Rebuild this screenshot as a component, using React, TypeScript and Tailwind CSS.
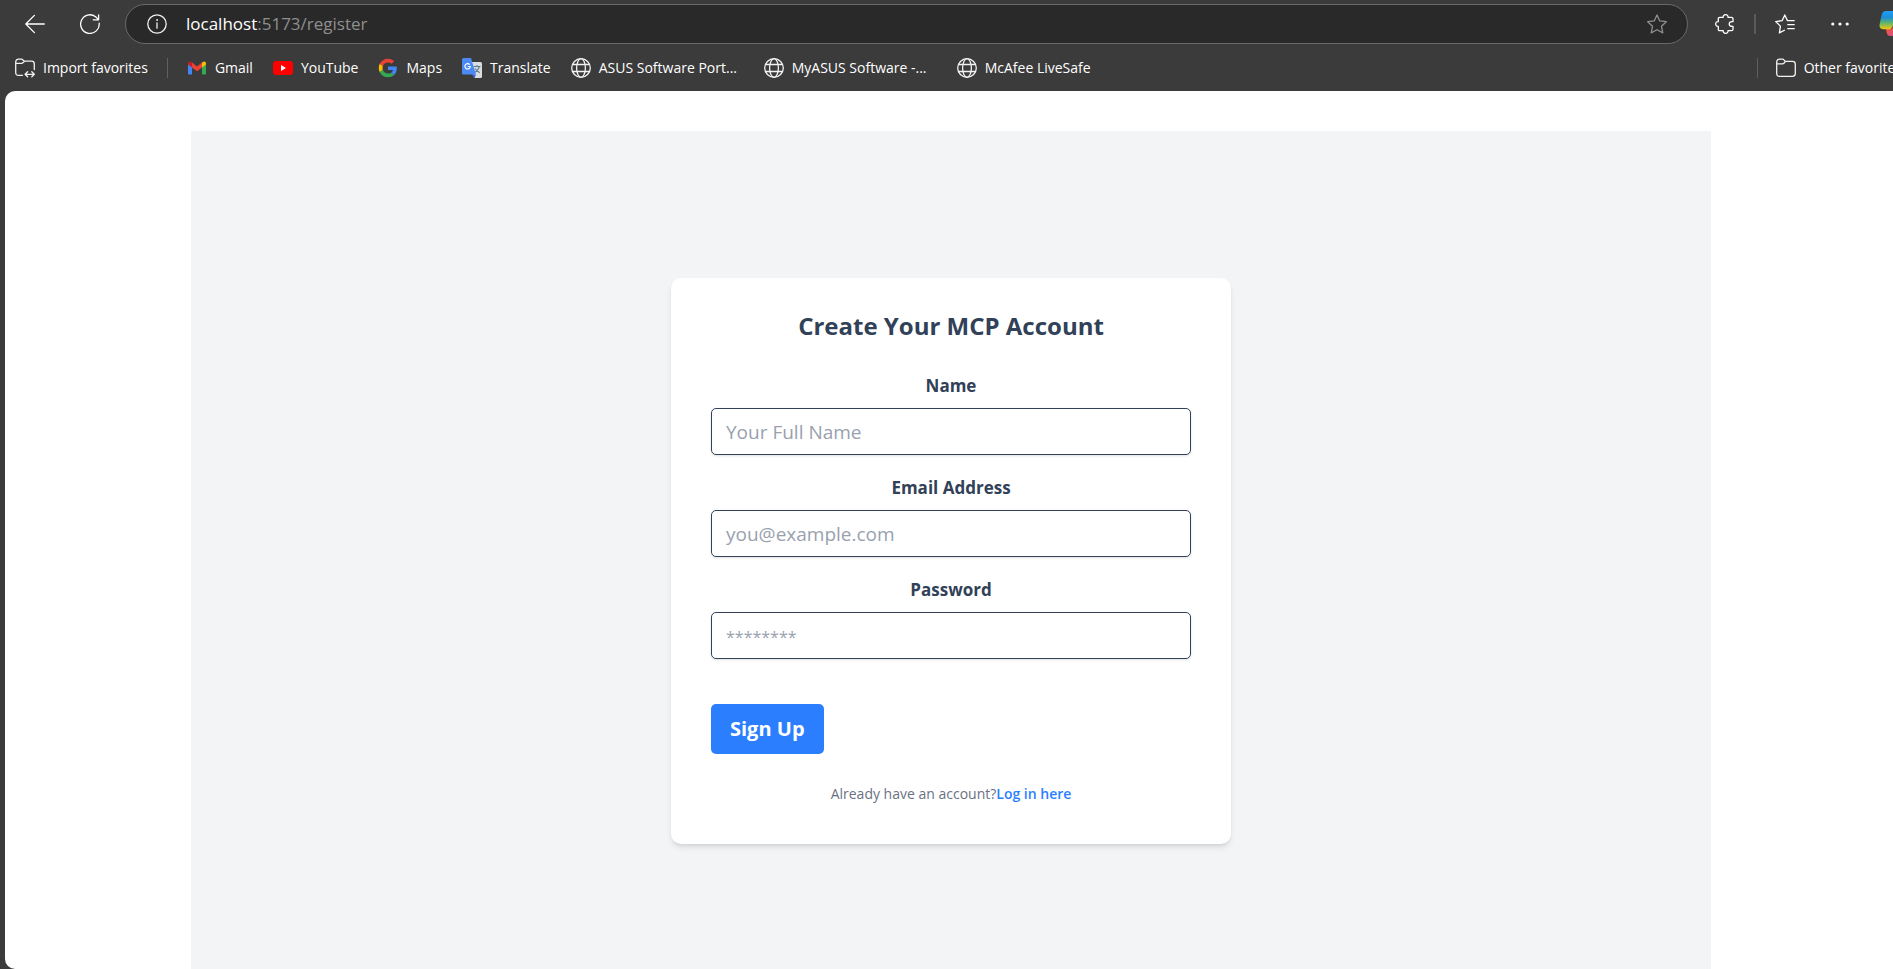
import type { ReactNode } from 'react';

function ArrowLeftIcon() {
  return (
    <svg width="20" height="20" viewBox="0 0 20 20" fill="none" stroke="#fff" strokeWidth="1.3" strokeLinecap="round" strokeLinejoin="round">
      <path d="M19.3 10H0.9M9.4 1.4L0.8 10L9.4 18.6" />
    </svg>
  );
}

function RefreshIcon() {
  return (
    <svg width="20" height="20" viewBox="0 0 20 20" fill="none" stroke="#fff" strokeWidth="1.3" strokeLinecap="round" strokeLinejoin="round">
      <path d="M19.2 9.2A9.3 9.3 0 1 1 15.6 2.7L18.6 5.6M18.6 0.8V5.8H13.2" />
    </svg>
  );
}

function InfoIcon() {
  return (
    <svg width="20" height="20" viewBox="0 0 20 20" fill="none" stroke="#f2f2f2" strokeWidth="1.3" strokeLinecap="round">
      <circle cx="10" cy="10" r="9.2" />
      <path d="M10 8.8V14.2" />
      <circle cx="10" cy="6" r="0.5" fill="#f2f2f2" stroke="#f2f2f2" strokeWidth="0.8" />
    </svg>
  );
}

function StarIcon() {
  return (
    <svg width="20" height="20" viewBox="0 0 20 20" fill="none" stroke="#8f8f8f" strokeWidth="1.3" strokeLinejoin="round">
      <path d="M10 0.9L12.8 6.9L19.3 7.7L14.5 12.3L15.8 18.9L10 15.7L4.2 18.9L5.5 12.3L0.7 7.7L7.2 6.9Z" />
    </svg>
  );
}

function PuzzleIcon() {
  return (
    <svg width="20" height="20" viewBox="0 0 20 20" fill="none" stroke="#fff" strokeWidth="1.3" strokeLinejoin="round">
      <path d="M4.3 3.3H8.2C8 1.6 9 0.7 10.6 0.7S13.2 1.6 13 3.3H16.5Q18 3.3 18 4.8V7.7C15.4 7.4 14.2 8.4 14.2 10S15.4 12.6 18 12.3V15.2Q18 16.7 16.5 16.7H13C13.2 18.4 12.2 19.3 10.6 19.3S8 18.4 8.2 16.7H4.8Q3.3 16.7 3.3 15.2V12.4C1.7 12.6 0.7 11.6 0.7 10S1.7 7.4 3.3 7.6V4.8Q3.3 3.3 4.8 3.3" />
    </svg>
  );
}

function FavoritesIcon() {
  return (
    <svg width="20" height="20" viewBox="0 0 20 20" fill="none" stroke="#fff" strokeWidth="1.3" strokeLinejoin="round" strokeLinecap="round">
      <path d="M19.2 6.7H12.5L9.8 0.9L7.1 6.7L0.7 7.6L5.4 12.1L4.4 18.9L9.4 16.2M12.8 10.7H19.2M12.8 14.7H19.2" />
    </svg>
  );
}

function DotsIcon() {
  return (
    <svg width="20" height="20" viewBox="0 0 20 20" fill="#fff">
      <circle cx="2.8" cy="10" r="1.6" />
      <circle cx="10" cy="10" r="1.6" />
      <circle cx="17.2" cy="10" r="1.6" />
    </svg>
  );
}

function CopilotIcon() {
  return (
    <svg width="30" height="28" viewBox="0 0 30 28">
      <defs>
        <linearGradient id="copilot-left" x1="0" y1="0" x2="0" y2="1">
          <stop offset="0" stopColor="#1f9df5" />
          <stop offset="0.35" stopColor="#1b8fd8" />
          <stop offset="0.65" stopColor="#5fb46b" />
          <stop offset="1" stopColor="#f6c90e" />
        </linearGradient>
        <linearGradient id="copilot-right" x1="0" y1="0" x2="1" y2="1">
          <stop offset="0" stopColor="#ffb34d" />
          <stop offset="0.4" stopColor="#f0553c" />
          <stop offset="1" stopColor="#c04fd8" />
        </linearGradient>
      </defs>
      <path d="M7 19H13L17 7L22 8V22Q21 26 17 26H11Q8.500 26 7.600 22.500Z" fill="url(#copilot-right)" />
      <path d="M7 1H19L13.500 16.500Q12.600 19.300 9.800 19.300H4Q0 19 0.600 14.500L2.600 5Q3.600 1 7 1Z" fill="url(#copilot-left)" />
    </svg>
  );
}

function FolderIcon() {
  return (
    <svg width="20" height="20" viewBox="0 0 20 20" fill="none" stroke="#f2f2f2" strokeWidth="1.3" strokeLinejoin="round">
      <path d="M0.700 4.200Q0.700 1.200 3.700 1.200H6.500Q7.300 1.200 7.900 1.900L9.300 3.400H16.500Q19.300 3.400 19.300 6.200V15.500Q19.300 18.300 16.500 18.300H3.500Q0.700 18.300 0.700 15.500ZM0.700 5.800H6.500Q7.300 5.800 7.900 5.200L9.500 3.400" />
    </svg>
  );
}

function ImportFolderIcon() {
  return (
    <svg width="20" height="20" viewBox="0 0 20 20" fill="none" stroke="#f2f2f2" strokeWidth="1.3" strokeLinejoin="round" strokeLinecap="round">
      <path d="M7.500 17.300H3.500Q0.700 17.300 0.700 14.500V4.200Q0.700 1.200 3.700 1.200H6.500Q7.300 1.200 7.900 1.900L9.300 3.200H16.500Q19.300 3.200 19.300 6V11.500M0.700 5.400H6.500Q7.300 5.400 7.900 4.800L9.500 3.200" />
      <path d="M10.300 16.300H19M12.600 13.800L10.100 16.300L12.600 18.800M16.800 13.800L19.300 16.300L16.800 18.800" />
    </svg>
  );
}

function GmailIcon() {
  return (
    <svg width="20" height="20" viewBox="0 0 20 20">
      <path d="M1 5.500L5 8.500V16.500H2.300Q1 16.500 1 15.200Z" fill="#4285f4" />
      <path d="M19 5.500L15 8.500V16.500H17.700Q19 16.500 19 15.200Z" fill="#34a853" />
      <path d="M5 4.600L10 8.400L15 4.600V9.400L10 13.200L5 9.400Z" fill="#ea4335" />
      <path d="M1 5.200Q1 3.400 2.700 3.400Q3.400 3.400 5 4.600V9.400L1 6.400Z" fill="#c5221f" />
      <path d="M19 5.200Q19 3.400 17.300 3.400Q16.600 3.400 15 4.600V9.400L19 6.400Z" fill="#fbbc04" />
    </svg>
  );
}

function YouTubeIcon() {
  return (
    <svg width="20" height="20" viewBox="0 0 20 20">
      <rect x="0" y="3" width="20" height="14" rx="3" fill="#f00" />
      <path d="M8 7L13 10L8 13Z" fill="#fff" />
    </svg>
  );
}

function GoogleIcon() {
  return (
    <svg width="20" height="20" viewBox="-2 -2 52 52">
      <path fill="#EA4335" d="M24 9.500c3.540 0 6.710 1.220 9.210 3.600l6.850-6.850C35.900 2.380 30.470 0 24 0 14.620 0 6.510 5.380 2.560 13.220l7.980 6.190C12.430 13.720 17.740 9.500 24 9.500z" />
      <path fill="#4285F4" d="M46.980 24.550c0-1.570-.15-3.090-.38-4.550H24v9.020h12.940c-.58 2.960-2.260 5.480-4.780 7.180l7.730 6c4.510-4.180 7.090-10.360 7.090-17.650z" />
      <path fill="#FBBC05" d="M10.530 28.590c-.48-1.450-.76-2.990-.76-4.590s.27-3.140.76-4.590l-7.980-6.190C.92 16.460 0 20.120 0 24c0 3.880.92 7.540 2.560 10.780l7.970-6.190z" />
      <path fill="#34A853" d="M24 48c6.480 0 11.930-2.130 15.890-5.810l-7.730-6c-2.150 1.450-4.920 2.300-8.160 2.300-6.260 0-11.570-4.220-13.470-9.910l-7.980 6.190C6.510 42.620 14.620 48 24 48z" />
    </svg>
  );
}

function TranslateIcon() {
  return (
    <svg width="20" height="20" viewBox="0 0 20 20" fill="none">
      <path d="M9 4H18.500Q20 4 20 5.500V18.500Q20 20 18.500 20H12.500Z" fill="#dadce0" />
      <path d="M11.500 8.500H18.500M15 7V8.500M17.500 8.500Q16.500 12 12.800 14.500M13 10.500Q14.500 13 17.800 14.800" stroke="#607d8b" strokeWidth="1.100" />
      <path d="M9.500 16.500H14L12.500 20Z" fill="#3367d6" />
      <path d="M1.500 0H9L14 16.500H1.500Q0 16.500 0 15V1.500Q0 0 1.500 0Z" fill="#4c8bf5" />
      <path d="M7.700 6.600A2.700 2.700 0 1 0 8.300 8.500H5.800" stroke="#fff" strokeWidth="1.200" />
    </svg>
  );
}

function GlobeIcon() {
  return (
    <svg width="20" height="20" viewBox="0 0 20 20" fill="none" stroke="#f2f2f2" strokeWidth="1.300">
      <circle cx="10" cy="10" r="9.300" />
      <ellipse cx="10" cy="10" rx="4.400" ry="9.300" />
      <path d="M1.500 6.500H18.500M1.500 13.500H18.500" />
    </svg>
  );
}

type IconButtonProps = { label: string; children: ReactNode };

function IconButton({ label, children }: IconButtonProps) {
  return (
    <button type="button" aria-label={label} className="flex size-5 shrink-0 items-center justify-center">
      {children}
    </button>
  );
}

type Bookmark = { label: string; icon: ReactNode; long?: boolean };

const bookmarks: Bookmark[] = [
  { label: 'Gmail', icon: <GmailIcon /> },
  { label: 'YouTube', icon: <YouTubeIcon /> },
  { label: 'Maps', icon: <GoogleIcon /> },
  { label: 'Translate', icon: <TranslateIcon /> },
  { label: 'ASUS Software Port...', icon: <GlobeIcon />, long: true },
  { label: 'MyASUS Software -...', icon: <GlobeIcon />, long: true },
  { label: 'McAfee LiveSafe', icon: <GlobeIcon /> },
];

function BrowserBar() {
  return (
    <header className="shrink-0 text-white">
      <div className="flex h-12 items-center pl-[25px]">
        <nav aria-label="Navigation" className="flex gap-[35px]">
          <IconButton label="Back">
            <ArrowLeftIcon />
          </IconButton>
          <IconButton label="Refresh">
            <RefreshIcon />
          </IconButton>
        </nav>
        <div className="ml-[25px] flex h-10 min-w-0 flex-1 items-center rounded-full border border-[#6a6a6a] bg-[#292929] pr-5 pl-[21px]">
          <IconButton label="View site information">
            <InfoIcon />
          </IconButton>
          <div role="textbox" aria-label="Address" className="ml-[19px] flex-1 text-[17px] leading-6 text-[#8f8f8f]">
            <span className="text-white">localhost</span>:5173/register
          </div>
          <IconButton label="Add this page to favorites">
            <StarIcon />
          </IconButton>
        </div>
        <div className="-mr-4 ml-[27px] flex shrink-0 items-center">
          <IconButton label="Extensions">
            <PuzzleIcon />
          </IconButton>
          <div className="mx-[19px] h-5 w-0.5 bg-[#5a5a5a]" />
          <IconButton label="Favorites">
            <FavoritesIcon />
          </IconButton>
          <div className="ml-[35px] flex">
            <IconButton label="Settings and more">
              <DotsIcon />
            </IconButton>
          </div>
          <button type="button" aria-label="Copilot" className="ml-[29px]">
            <CopilotIcon />
          </button>
        </div>
      </div>
      <div className="flex h-[43px] items-center pb-1 pl-[15px] text-sm whitespace-nowrap">
        <button type="button" className="flex items-center gap-2">
          <ImportFolderIcon />
          Import favorites
        </button>
        <div className="mx-[19px] h-5 w-px bg-[#5f5f5f]" />
        <nav aria-label="Favorites bar" className="flex flex-1 gap-5">
          {bookmarks.map((bookmark) => (
            <a key={bookmark.label} href="#" className="flex items-center gap-2">
              {bookmark.icon}
              <span className={bookmark.long ? 'w-[145px]' : ''}>{bookmark.label}</span>
            </a>
          ))}
        </nav>
        <div className="mr-[18px] h-5 w-px bg-[#5f5f5f]" />
        <button type="button" className="-mr-[9px] flex shrink-0 items-center gap-2">
          <FolderIcon />
          Other favorites
        </button>
      </div>
    </header>
  );
}

type FieldProps = { id: string; label: string; type: string; placeholder: string };

function Field({ id, label, type, placeholder }: FieldProps) {
  return (
    <div className="mb-5">
      <label htmlFor={id} className="mb-2.5 block text-center text-[17px] leading-[25px] font-bold">
        {label}
      </label>
      <input
        id={id}
        type={type}
        placeholder={placeholder}
        className={`block h-[47px] w-full rounded-[5px] border border-slate-700 px-3.5 text-[19px] shadow-sm placeholder:text-[#99a1af] ${type === 'password' ? 'placeholder:text-base' : ''}`}
      />
    </div>
  );
}

function RegisterCard() {
  return (
    <form className="w-full max-w-[560px] rounded-[10px] bg-white px-10 pt-[30px] pb-10 text-slate-700 shadow-md">
      <h2 className="mb-[30px] text-center text-2xl leading-[35px] font-bold">Create Your MCP Account</h2>
      <Field id="name" label="Name" type="text" placeholder="Your Full Name" />
      <Field id="email" label="Email Address" type="email" placeholder="you@example.com" />
      <Field id="password" label="Password" type="password" placeholder="********" />
      <button type="button" className="mt-[45px] block h-[50px] rounded-[5px] bg-[#2b7fff] px-[19px] text-xl font-bold text-white">
        Sign Up
      </button>
      <p className="mt-[30px] text-center text-sm text-[#6a7282]">
        Already have an account?
        <a href="#" className="font-semibold text-[#2b7fff]">
          Log in here
        </a>
      </p>
    </form>
  );
}

export default function App() {
  return (
    <div className="flex h-screen flex-col overflow-hidden bg-[#3b3b3b] font-['Segoe_UI','Open_Sans','Noto_Sans',sans-serif]">
      <BrowserBar />
      <main className="-mr-1 ml-[5px] min-h-0 flex-1 overflow-hidden rounded-l-[10px] bg-white px-10 pt-10">
        <div className="mx-auto flex min-h-[calc(100vh-109px)] max-w-[1520px] items-center justify-center bg-gray-100">
          <RegisterCard />
        </div>
      </main>
    </div>
  );
}
